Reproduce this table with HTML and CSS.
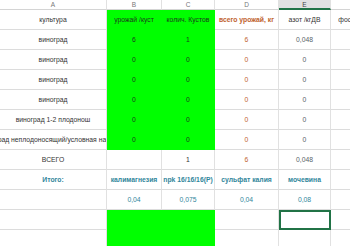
FILE: index.html
```html
<!DOCTYPE html>
<html>
<head>
<meta charset="utf-8">
<link rel="stylesheet" href="styles.css">
</head>
<body>
<div class="sheet">
  <div class="hd">A</div><div class="hd">B</div><div class="hd">C</div><div class="hd">D</div><div class="hd sel">E</div><div class="hd"></div>

  <div class="c">культура</div><div class="c g">урожай /куст</div><div class="c g">колич. Кустов</div><div class="c br b">всего урожай, кг</div><div class="c">азот /кгДВ</div><div class="c">фосфор /кгДВ</div>

  <div class="c">виноград</div><div class="c g">6</div><div class="c g">1</div><div class="c br">6</div><div class="c gr">0,048</div><div class="c"></div>
  <div class="c">виноград</div><div class="c g">0</div><div class="c g">0</div><div class="c br">0</div><div class="c gr">0</div><div class="c"></div>
  <div class="c">виноград</div><div class="c g">0</div><div class="c g">0</div><div class="c br">0</div><div class="c gr">0</div><div class="c"></div>
  <div class="c">виноград</div><div class="c g">0</div><div class="c g">0</div><div class="c br">0</div><div class="c gr">0</div><div class="c"></div>
  <div class="c">виноград 1-2 плодонош</div><div class="c g">0</div><div class="c g">0</div><div class="c br">0</div><div class="c gr">0</div><div class="c"></div>
  <div class="c"><span>виноград неплодоносящий/условная нагрузка</span></div><div class="c g">0</div><div class="c g">0</div><div class="c br">0</div><div class="c gr">0</div><div class="c"></div>

  <div class="c">ВСЕГО</div><div class="c"></div><div class="c">1</div><div class="c br">6</div><div class="c gr">0,048</div><div class="c"></div>
  <div class="c t b">Итого:</div><div class="c t b">калимагнезия</div><div class="c t b">npk 16/16/16(P)</div><div class="c t b">сульфат калия</div><div class="c t b">мочевина</div><div class="c"></div>
  <div class="c"></div><div class="c t">0,04</div><div class="c t">0,075</div><div class="c t">0,04</div><div class="c t">0,08</div><div class="c"></div>
  <div class="c"></div><div class="c g"></div><div class="c g"></div><div class="c"></div><div class="c active"></div><div class="c"></div>
  <div class="c"></div><div class="c g"></div><div class="c g"></div><div class="c"></div><div class="c"></div><div class="c"></div>
</div>
</body>
</html>
```
FILE: styles.css
```css
html, body {
  margin: 0;
  padding: 0;
  background: #ffffff;
  overflow: hidden;
}
.sheet {
  display: grid;
  grid-template-columns: 107px 55px 53px 64px 52px 60px;
  grid-template-rows: 10px repeat(12, 20px);
  width: 391px;
  font-family: "Liberation Sans", Arial, sans-serif;
  font-size: 6.8px;
  color: #333333;
}
.hd {
  display: flex;
  align-items: center;
  justify-content: center;
  box-sizing: border-box;
  border-right: 1px solid #e1e1e1;
  border-bottom: 1px solid #d4d4d4;
  color: #777777;
  font-size: 6.5px;
  background: #ffffff;
}
.hd.sel {
  background: #e1e1e1;
  border-bottom: 2px solid #217346;
  color: #444444;
}
.c {
  display: flex;
  align-items: center;
  justify-content: center;
  box-sizing: border-box;
  border-right: 1px solid #e1e1e1;
  border-bottom: 1px solid #dcdcdc;
  white-space: nowrap;
  overflow: hidden;
}
.c span {
  flex: none;
}
.g {
  background: #00ff00;
  border-color: #00ff00;
  color: #1c3a1c;
}
.br {
  color: #c0622e;
}
.gr {
  color: #5a6268;
}
.t {
  color: #31869b;
}
.b {
  font-weight: bold;
}
.active {
  border: 2px solid #217346;
}
```
